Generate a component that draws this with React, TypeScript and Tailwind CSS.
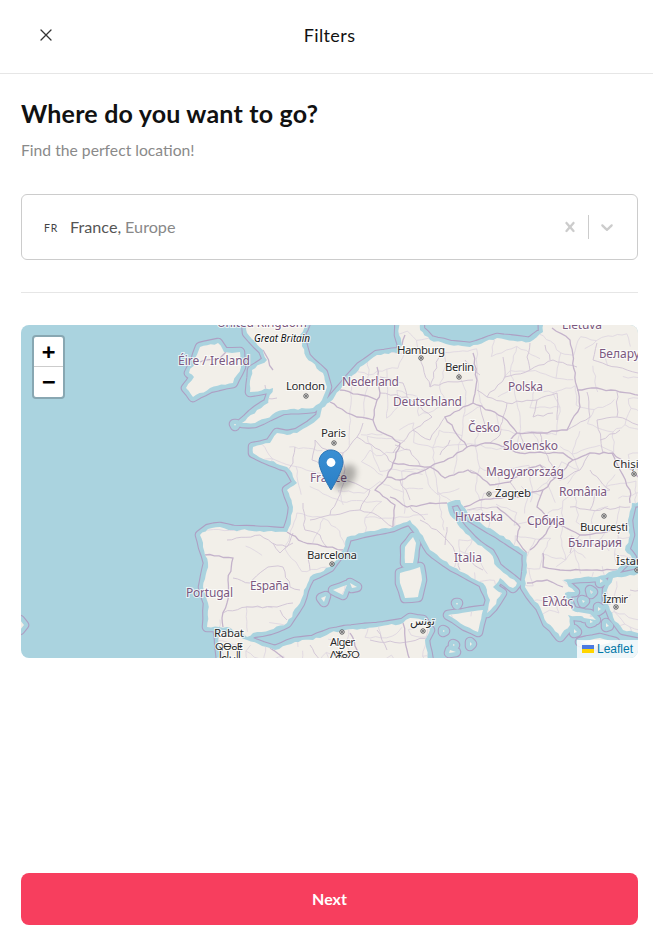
import React from "react";

type P = [number, number];

function noise(i: number, s: number) {
  const v = Math.sin(i * 12.9898 + s * 78.233) * 43758.5453;
  return v - Math.floor(v) - 0.5;
}

function jag(pts: P[], amp: number, seg: number, closed: boolean, seed: number) {
  const list = closed ? [...pts, pts[0]] : pts;
  let d = "";
  let k = 0;
  for (let i = 0; i < list.length - 1; i++) {
    const [ax, ay] = list[i];
    const [bx, by] = list[i + 1];
    const len = Math.hypot(bx - ax, by - ay) || 1;
    const n = Math.max(1, Math.round(len / seg));
    const nx = -(by - ay) / len;
    const ny = (bx - ax) / len;
    if (i === 0) d += `M${ax} ${ay}`;
    for (let j = 1; j <= n; j++) {
      const t = j / n;
      const off = j === n ? 0 : noise(k++, seed + i) * amp * 2;
      d += `L${(ax + (bx - ax) * t + nx * off).toFixed(1)} ${(ay + (by - ay) * t + ny * off).toFixed(1)}`;
    }
  }
  return closed ? d + "Z" : d;
}

const main: P[] = [
  [200, 535], [208, 529], [220, 527], [233, 530], [260, 531], [287, 532], [291, 520], [293, 507], [287, 490], [297, 483], [290, 470], [287, 467], [270, 461], [253, 453], [253, 447], [270, 443], [277, 433], [287, 435], [297, 433], [310, 425], [320, 417], [322, 408], [330, 402], [340, 390], [350, 378], [360, 367], [377, 355], [400, 352], [402, 345], [399, 335], [400, 315], [420, 315], [420, 330], [430, 340], [450, 345], [470, 347], [497, 338], [530, 342], [543, 332], [543, 315], [650, 315],
  [650, 500], [632, 503], [628, 520], [630, 535], [625, 550], [632, 558], [625, 562], [617, 570], [597, 577], [580, 578], [563, 580], [575, 592], [565, 593], [572, 610], [585, 617], [568, 615], [570, 625], [560, 637], [553, 628], [547, 623], [540, 607], [530, 595], [525, 587], [527, 565], [527, 553], [512, 543], [497, 533], [483, 525], [470, 517], [464, 507], [460, 500], [447, 503],
  [450, 515], [463, 530], [478, 545], [490, 553], [497, 567], [507, 575], [517, 583], [513, 588], [500, 578], [493, 587], [502, 593], [493, 607], [487, 613], [490, 600], [483, 583], [468, 575], [453, 567], [440, 558], [430, 550], [420, 533], [410, 520], [393, 527], [378, 530], [363, 533], [347, 537], [343, 550], [330, 567], [310, 577], [304, 590], [300, 603], [287, 623], [270, 630], [253, 633], [247, 637], [237, 632], [227, 627], [207, 627], [208, 603], [203, 587], [208, 563], [203, 547],
];
const gb: P[] = [[245, 315], [310, 315], [300, 335], [306, 357], [323, 373], [327, 387], [322, 400], [313, 408], [283, 410], [255, 423], [242, 423], [257, 410], [268, 403], [273, 388], [250, 392], [252, 370], [267, 360], [263, 350], [247, 333]];
const ireland: P[] = [[200, 347], [218, 343], [224, 352], [240, 352], [241, 367], [233, 383], [210, 388], [193, 397], [186, 388], [194, 377], [189, 373], [195, 362]];
const turkey: P[] = [[650, 572], [630, 575], [613, 578], [607, 590], [607, 603], [613, 617], [623, 630], [638, 633], [650, 634]];
const africa: P[] = [[222, 665], [218, 632], [235, 633], [247, 640], [262, 646], [275, 650], [295, 642], [313, 640], [330, 633], [345, 630], [377, 627], [403, 623], [410, 618], [423, 620], [430, 630], [425, 640], [430, 665]];
const isles: P[][] = [
  [[405, 547], [413, 537], [416, 543], [413, 563], [405, 563]],
  [[400, 573], [420, 567], [422, 580], [418, 597], [405, 598], [400, 583]],
  [[448, 615], [483, 610], [478, 632], [465, 626]],
  [[333, 590], [347, 585], [343, 595]],
  [[350, 583], [357, 587], [352, 588]],
  [[321, 598], [326, 596], [324, 602]],
  [[282, 436], [284, 438], [281, 439]],
  [[234, 424], [236, 424], [235, 426]],
  [[456, 603], [458, 603], [457, 605]],
  [[443, 630], [445, 631], [443, 632]],
  [[470, 642], [472, 644], [470, 646]],
  [[453, 644], [455, 645], [453, 646]],
  [[456, 652], [450, 650], [449, 653]],
  [[20, 620], [24, 625], [20, 630]],
  [[590, 590], [593, 592], [591, 594]],
  [[582, 600], [585, 601], [583, 603]],
  [[598, 607], [601, 609], [598, 611]],
  [[590, 620], [593, 622], [590, 623]],
  [[606, 623], [609, 626], [606, 627]],
  [[580, 642], [600, 638], [615, 642], [596, 646]],
  [[574, 629], [577, 632], [574, 633]],
  [[600, 579], [603, 581], [600, 583]],
  [[540, 599], [542, 601], [540, 604]],
  [[578, 612], [590, 614], [596, 620], [584, 618]],
  [[263, 325], [270, 315], [275, 330], [268, 336]],
];

const land = [main, gb, ireland, turkey, africa].map((p, i) => jag(p, 1.1, 4, true, i + 1));
const isleD = isles.map((p, i) => jag(p, 0.3, 5, true, i + 20));
const allLand = [...land, ...isleD].join(" ");
const ringPath = [main, gb, ireland, turkey, africa, ...isles].map((p, i) => jag(p, 0.4, 7, true, i + 1)).join(" ");

const countries: P[][] = [
  [[287, 532], [303, 542], [327, 547], [343, 550]],
  [[205, 555], [233, 558], [228, 580], [227, 603], [222, 618], [223, 627]],
  [[330, 402], [337, 407], [357, 417], [373, 420], [377, 430], [392, 437], [400, 443], [393, 463], [387, 477], [375, 490], [395, 505], [393, 527]],
  [[340, 390], [362, 395], [377, 400], [373, 420]],
  [[377, 367], [380, 393], [377, 400]],
  [[473, 353], [477, 380], [473, 403], [445, 417], [467, 447], [453, 457], [430, 467], [393, 463]],
  [[473, 403], [477, 405], [503, 417], [517, 433], [537, 433], [567, 430], [580, 407], [577, 387], [570, 340], [552, 328]],
  [[467, 447], [490, 443], [503, 447], [520, 453], [540, 452], [563, 453], [573, 460], [590, 453], [613, 453], [638, 477]],
  [[503, 447], [517, 433]],
  [[577, 390], [597, 388], [620, 392], [650, 396]],
  [[573, 460], [555, 478], [543, 490], [537, 507], [553, 522], [580, 535], [607, 532], [630, 523]],
  [[430, 467], [445, 478], [468, 470], [480, 476], [490, 485], [510, 482], [523, 470], [540, 465], [555, 478]],
  [[390, 497], [407, 507], [430, 503], [447, 503]],
  [[387, 477], [400, 480], [430, 467]],
  [[464, 507], [480, 500], [517, 497], [543, 490]],
  [[497, 507], [520, 527], [517, 540], [527, 553]],
  [[530, 550], [543, 537], [553, 522]],
  [[543, 553], [543, 567], [560, 570], [597, 570], [617, 570]],
  [[527, 583], [547, 580], [563, 587]],
  [[350, 633], [357, 650], [360, 660]],
  [[270, 648], [285, 660]],
  [[403, 623], [407, 650], [410, 660]],
  [[200, 362], [220, 358], [226, 352]],
  [[263, 350], [273, 370]],
  [[612, 453], [620, 470], [630, 490], [630, 503]],
  [[405, 335], [402, 345]],
];
const regions: P[][] = [
  [[227, 540], [260, 535], [272, 543], [287, 547], [293, 533]],
  [[233, 578], [250, 583], [268, 567], [283, 567], [290, 587], [300, 590]],
  [[223, 613], [247, 607], [253, 607], [277, 607], [293, 603]],
  [[280, 610], [287, 620]], [[307, 553], [310, 570]], [[273, 543], [280, 553], [293, 543]],
  [[303, 503], [305, 530]], [[310, 520], [330, 515], [345, 480]],
  [[295, 447], [293, 463], [283, 477]], [[315, 440], [312, 460], [328, 470], [345, 480]],
  [[363, 423], [357, 437], [343, 453], [345, 480], [370, 490], [360, 510], [330, 515]],
  [[345, 480], [310, 475]], [[393, 463], [380, 450], [357, 437]],
  [[360, 510], [373, 513], [393, 527]], [[343, 453], [322, 448], [315, 440]], [[305, 530], [320, 535], [327, 547]],
  [[420, 357], [430, 387], [443, 383], [473, 380]], [[407, 397], [432, 417], [413, 430], [393, 453]],
  [[440, 353], [430, 387]], [[380, 377], [403, 383], [407, 397]], [[380, 393], [407, 397]], [[413, 430], [430, 440], [445, 417]],
  [[503, 357], [505, 377], [530, 370], [553, 360], [577, 367]], [[530, 343], [527, 357], [530, 370]],
  [[487, 397], [507, 403], [537, 400], [557, 393], [557, 420]], [[507, 403], [503, 417]], [[537, 400], [533, 417], [553, 413]],
  [[505, 377], [487, 397], [477, 390]], [[597, 343], [593, 360], [617, 367], [638, 373]], [[617, 417], [597, 420], [603, 453]],
  [[587, 392], [590, 417], [567, 430]], [[617, 392], [617, 417], [638, 425]], [[480, 405], [485, 425], [470, 432]],
  [[503, 417], [500, 435], [490, 443]], [[520, 433], [525, 450]], [[540, 433], [545, 452], [553, 470]],
  [[420, 520], [440, 533], [453, 547], [460, 570]], [[467, 560], [483, 570]], [[447, 527], [445, 545]],
  [[467, 510], [497, 507]], [[570, 507], [590, 510], [597, 490]], [[590, 510], [630, 507]], [[570, 553], [580, 535]],
  [[377, 630], [387, 650]], [[370, 640], [400, 643], [430, 637]], [[310, 645], [320, 660]], [[650, 590], [630, 590]],
  [[247, 400], [277, 398]], [[268, 403], [265, 385]], [[410, 507], [425, 520]], [[400, 480], [410, 500]], [[480, 476], [470, 470]],
  [[540, 465], [560, 480], [580, 470], [590, 453]], [[590, 470], [610, 490], [597, 490]], [[510, 482], [520, 497]],
  [[620, 430], [600, 440]], [[545, 345], [550, 360]], [[465, 360], [480, 375]], [[440, 455], [450, 440]], [[395, 445], [410, 450], [420, 465]],
];

function meshLines(x0: number, y0: number, x1: number, y1: number, cell: number, keep: number, seed: number) {
  const node = (i: number, j: number): P => [
    x0 + i * cell + noise(i * 31 + j, seed) * cell * 0.8,
    y0 + j * cell + noise(j * 37 + i, seed + 3) * cell * 0.8,
  ];
  let d = "";
  let k = 0;
  for (let i = 0; i * cell + x0 <= x1; i++) {
    for (let j = 0; j * cell + y0 <= y1; j++) {
      if (noise(k++, seed + 7) + 0.5 < keep) d += jag([node(i, j), node(i + 1, j)], 1.1, 5, false, seed + k);
      if (noise(k++, seed + 9) + 0.5 < keep) d += jag([node(i, j), node(i, j + 1)], 1.1, 5, false, seed + k);
    }
  }
  return d;
}
const meshA = meshLines(345, 335, 640, 500, 19, 0.62, 200);
const meshB = meshLines(440, 495, 640, 640, 15, 0.5, 300);
const meshC = meshLines(210, 440, 400, 620, 27, 0.4, 400);
const meshD = meshLines(220, 625, 430, 660, 16, 0.6, 500);

type L = [string, number, number, number?];
const countryLabels: L[] = [
  ["Éire / Ireland", 178, 364.5, 72], ["Nederland", 342, 386, 57], ["Deutschland", 393, 406, 69], ["Polska", 508, 391, 35],
  ["Česko", 468, 432, 32], ["Slovensko", 503, 450, 55], ["Magyarország", 486, 476, 78], ["Lietuva", 562, 329, 40],
  ["Беларусь", 599, 358], ["România", 559, 496, 48], ["Hrvatska", 455, 521, 48], ["Србија", 527, 525, 38],
  ["България", 568, 547, 54], ["Italia", 454, 562, 28], ["España", 250, 590, 39], ["Portugal", 186, 597, 47],
  ["Ελλάς", 542, 606, 31], ["France", 310, 482, 37], ["United Kingdom", 217, 327, 90],
];
const cityLabels: L[] = [
  ["London", 286, 390, 39], ["Paris", 321, 437, 25], ["Hamburg", 397, 354, 48], ["Berlin", 445, 371, 29],
  ["Chișinău", 613, 468], ["Zagreb", 495, 497, 36], ["București", 580, 531, 48], ["İstanbul", 616, 565],
  ["Barcelona", 307, 559, 50], ["Rabat", 214, 637, 30], ["Alger", 330, 646, 25], ["İzmir", 603, 603, 25],
  ["تونس", 410, 625, 25], ["الرباط", 217, 660, 24],
];
const dots: P[] = [[306, 396], [334, 443], [421, 358], [459, 377], [634, 474], [489, 494], [604, 516], [637, 570], [332, 564], [342, 632], [423, 631], [616, 607]];

function MapDrawing() {
  return (
    <svg viewBox="21 325 617 333" width="617" height="333" className="block">
      <defs>
        <linearGradient id="pin" x1="0" y1="0" x2="0" y2="1">
          <stop offset="0" stopColor="#3a8fd3" />
          <stop offset="1" stopColor="#2a7fc6" />
        </linearGradient>
        <filter id="soft" x="-50%" y="-50%" width="200%" height="200%">
          <feGaussianBlur stdDeviation="3" />
        </filter>
        <clipPath id="landclip">
          <path d={allLand} />
        </clipPath>
      </defs>
      <rect x="21" y="325" width="617" height="333" fill="#aad3df" />
      <path d={ringPath} fill="none" stroke="#ad9fc3" strokeWidth="10.6" strokeLinejoin="round" />
      <path d={ringPath} fill="none" stroke="#aad3df" strokeWidth="8.4" strokeLinejoin="round" />
      <path d={allLand} fill="#f2efe9" />
      <g clipPath="url(#landclip)">
        <path d={meshA + meshB + meshC + meshD} fill="none" stroke="#dfd7e1" strokeWidth="0.9" />
        {regions.map((p, i) => (
          <path key={i} d={jag(p, 1.2, 5, false, i + 50)} fill="none" stroke="#d3c7d7" strokeWidth="1" />
        ))}
        {countries.map((p, i) => (
          <path key={i} d={jag(p, 1, 5, false, i + 120)} fill="none" stroke="#c4b3cb" strokeWidth="1.3" />
        ))}
      </g>
      {countryLabels.map(([t, x, y, w]) => (
        <text key={t} x={x} y={y} textLength={w} className="font-['Noto_Sans','DejaVu_Sans',sans-serif] text-[12px] [paint-order:stroke]" fill="#7b5880" stroke="#ffffff" strokeOpacity="0.7" strokeWidth="2.2">{t}</text>
      ))}
      {cityLabels.map(([t, x, y, w]) => (
        <text key={t} x={x} y={y} textLength={w} className="font-['Noto_Sans','DejaVu_Sans',sans-serif] text-[11.5px] [paint-order:stroke]" fill="#2b2b2b" stroke="#ffffff" strokeOpacity="0.7" strokeWidth="2.2">{t}</text>
      ))}
      <text x="254" y="342" textLength="56" className="font-['Noto_Sans',sans-serif] text-[10px] italic [paint-order:stroke]" fill="#111111" stroke="#ffffff" strokeOpacity="0.7" strokeWidth="2">Great Britain</text>
      <text x="215" y="650" textLength="28" className="font-['DejaVu_Sans',sans-serif] text-[10px] [paint-order:stroke]" fill="#2b2b2b" stroke="#ffffff" strokeOpacity="0.7" strokeWidth="2">ⵕⴱⴰⵟ</text>
      <text x="330" y="658" textLength="30" className="font-['DejaVu_Sans',sans-serif] text-[10px] [paint-order:stroke]" fill="#2b2b2b" stroke="#ffffff" strokeOpacity="0.7" strokeWidth="2">ⴷⵣⴰⵢⵔ</text>
      {dots.map(([x, y], i) => (
        <g key={i}>
          <circle cx={x} cy={y} r="2.2" fill="#ffffff" stroke="#444444" strokeWidth="0.9" />
          <circle cx={x} cy={y} r="0.9" fill="#444444" />
        </g>
      ))}
      <ellipse cx="345" cy="477" rx="9" ry="14" fill="#000000" opacity="0.28" filter="url(#soft)" transform="rotate(38 345 477)" />
      <g transform="translate(318.5 449.5)">
        <path d="M12.5 0.5C5.9 0.5 0.5 5.9 0.5 12.5 0.5 21 12.5 40.5 12.5 40.5S24.5 21 24.5 12.5C24.5 5.9 19.1 0.5 12.5 0.5z" fill="url(#pin)" stroke="#2a74b5" strokeWidth="1" />
        <circle cx="12.5" cy="13" r="4.4" fill="#ffffff" />
      </g>
    </svg>
  );
}

export default function App() {
  return (
    <div className="flex h-[944px] w-full flex-col bg-white font-['Lato',sans-serif] text-[#111111]">
      <header className="relative flex h-[74px] items-center justify-center border-b border-[#e6e6e6] pl-[6px]">
        <svg viewBox="0 0 12 12" width="12" height="12" className="absolute left-[40px] top-[29px]" fill="none" stroke="#333333" strokeWidth="1.3" strokeLinecap="round">
          <path d="M1 1l10 10M11 1L1 11" />
        </svg>
        <span className="relative top-[-2px] text-[18px] font-normal leading-none tracking-[0.4px]">Filters</span>
      </header>
      <main className="flex flex-1 flex-col pb-[19px] pl-[21px] pr-[15px]">
        <h1 className="mt-[23px] text-[25px] font-bold leading-[32px] tracking-[0.2px] text-[#111111]">Where do you want to go?</h1>
        <p className="mt-[10px] text-[15.7px] leading-[22px] text-[#8a8a8a]">Find the perfect location!</p>
        <div className="mt-[33px] flex h-[66px] items-center rounded-[6px] border border-[#cccccc] pl-[22px] pr-[20px]">
          <span className="relative top-[2px] w-[26px] text-[10.5px] font-normal tracking-[0.8px] text-[#444444]">FR</span>
          <span className="text-[16.2px] text-[#555555]">France,</span>
          <span className="ml-[4px] text-[16.2px] text-[#888888]">Europe</span>
          <svg viewBox="0 0 20 20" width="20" height="20" fill="#cccccc" className="ml-auto">
            <path d="M14.348 14.849c-0.469 0.469-1.229 0.469-1.697 0l-2.651-3.030-2.651 3.029c-0.469 0.469-1.229 0.469-1.697 0-0.469-0.469-0.469-1.229 0-1.697l2.758-3.15-2.759-3.152c-0.469-0.469-0.469-1.228 0-1.697s1.228-0.469 1.697 0l2.652 3.031 2.651-3.031c0.469-0.469 1.228-0.469 1.697 0s0.469 1.229 0 1.697l-2.758 3.152 2.758 3.15c0.469 0.469 0.469 1.229 0 1.698z" />
          </svg>
          <div className="mx-[8px] h-[24px] w-px bg-[#cccccc]" />
          <svg viewBox="0 0 20 20" width="20" height="20" fill="#cccccc">
            <path d="M4.516 7.548c0.436-0.446 1.043-0.481 1.576 0l3.908 3.747 3.908-3.747c0.533-0.481 1.141-0.446 1.574 0 0.436 0.445 0.408 1.197 0 1.615-0.406 0.418-4.695 4.502-4.695 4.502-0.217 0.223-0.502 0.335-0.787 0.335s-0.57-0.112-0.789-0.335c0 0-4.287-4.084-4.695-4.502s-0.436-1.17 0-1.615z" />
          </svg>
        </div>
        <div className="mt-[32px] h-px bg-[#e6e6e6]" />
        <div className="relative mt-[32px] h-[333px] overflow-hidden rounded-[8px]">
          <MapDrawing />
          <div className="absolute left-[11px] top-[10px] w-[33px] overflow-hidden rounded-[4px] border-2 border-[#88a7b2] bg-white font-['DejaVu_Sans_Mono',monospace] font-bold text-black">
            <div className="flex h-[30px] items-center justify-center border-b border-[#cccccc] text-[22px] leading-none">+</div>
            <div className="flex h-[30px] items-center justify-center text-[22px] leading-none">−</div>
          </div>
          <div className="absolute bottom-0 right-0 flex h-[18px] items-center gap-[3px] bg-white/80 pl-[5px] pr-[5px] font-['Liberation_Sans',sans-serif] text-[12px] text-[#0078a8]">
            <svg viewBox="0 0 12 8" width="12" height="8">
              <rect width="12" height="4" fill="#4c7be1" />
              <rect y="4" width="12" height="4" fill="#ffd500" />
            </svg>
            <span>Leaflet</span>
          </div>
        </div>
        <button className="mt-auto flex h-[52px] w-full items-center justify-center rounded-[8px] bg-[#f73e5e] text-[16px] font-bold text-white">Next</button>
      </main>
    </div>
  );
}
